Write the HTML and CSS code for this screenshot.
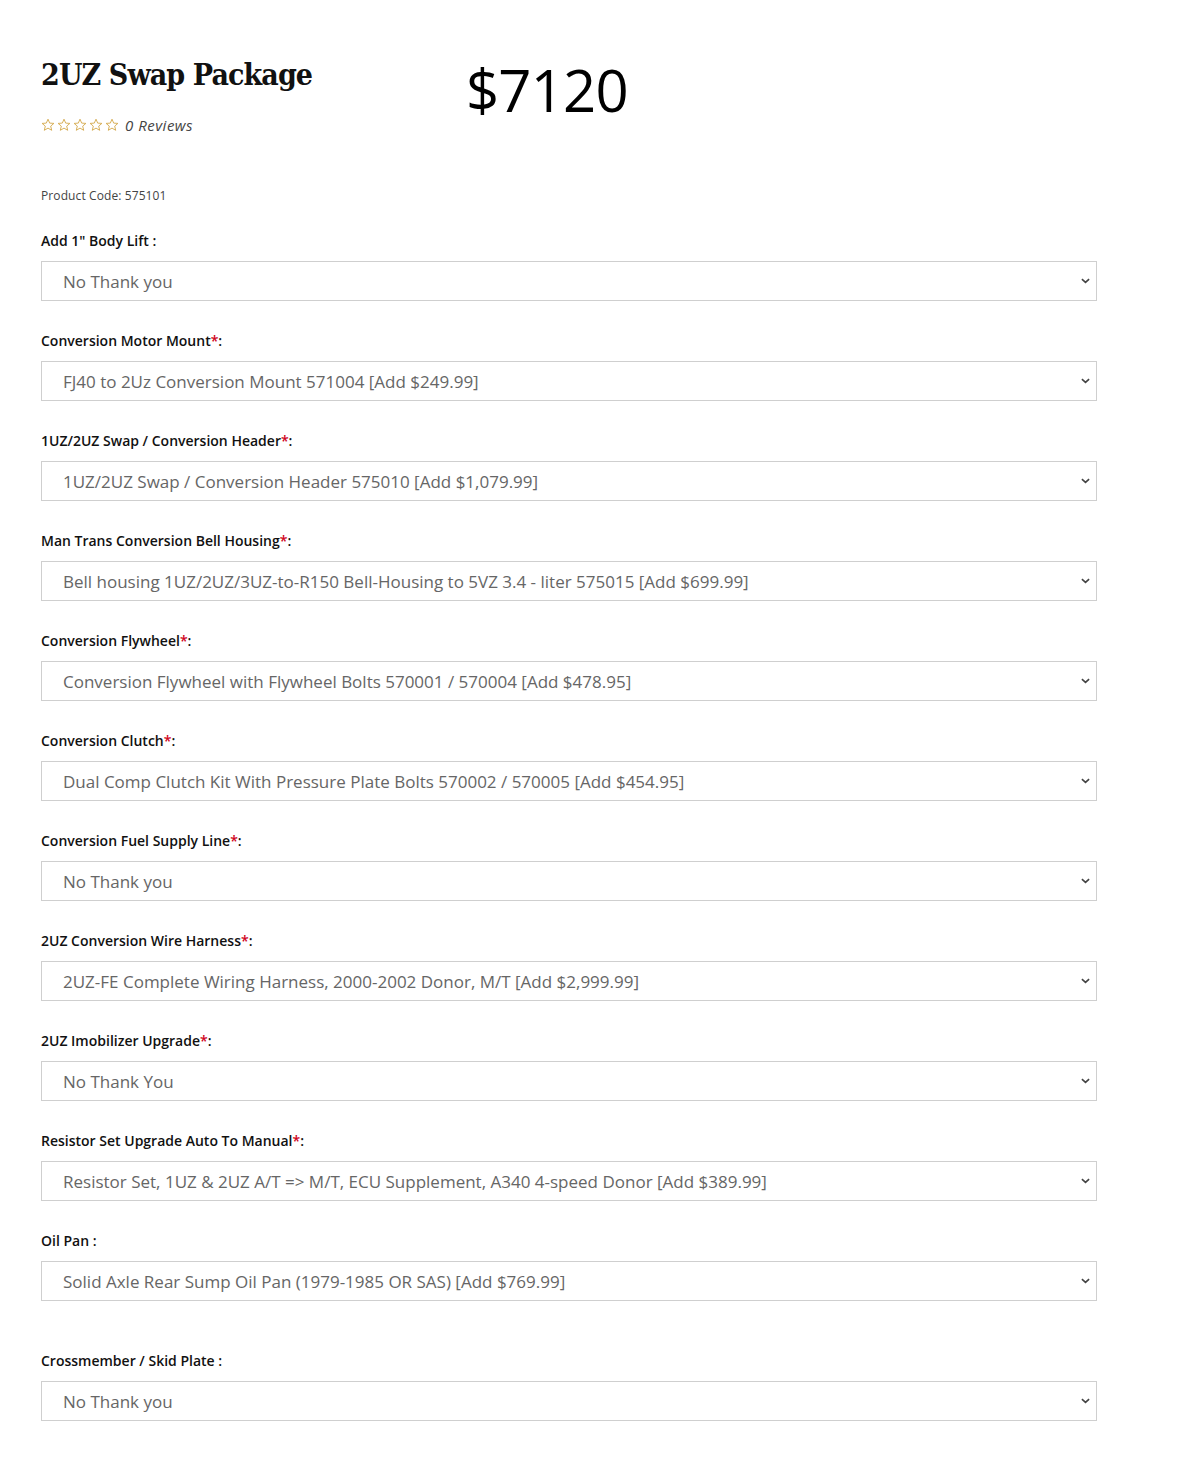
FILE: index.html
```html
<!DOCTYPE html>
<html>
<head>
<meta charset="utf-8">
<link rel="stylesheet" href="styles.css">
</head>
<body>
<div class="page">
  <div class="head">
    <div class="title-block">
      <h1 class="title">2UZ Swap Package</h1>
      <div class="rating">
        <span class="stars">
          <svg viewBox="0 0 14 14" class="star"><path d="M7 1.2 8.7 5.1 12.9 5.4 9.7 8.1 10.7 12.3 7 10.1 3.3 12.3 4.3 8.1 1.1 5.4 5.3 5.1Z"/></svg>
          <svg viewBox="0 0 14 14" class="star"><path d="M7 1.2 8.7 5.1 12.9 5.4 9.7 8.1 10.7 12.3 7 10.1 3.3 12.3 4.3 8.1 1.1 5.4 5.3 5.1Z"/></svg>
          <svg viewBox="0 0 14 14" class="star"><path d="M7 1.2 8.7 5.1 12.9 5.4 9.7 8.1 10.7 12.3 7 10.1 3.3 12.3 4.3 8.1 1.1 5.4 5.3 5.1Z"/></svg>
          <svg viewBox="0 0 14 14" class="star"><path d="M7 1.2 8.7 5.1 12.9 5.4 9.7 8.1 10.7 12.3 7 10.1 3.3 12.3 4.3 8.1 1.1 5.4 5.3 5.1Z"/></svg>
          <svg viewBox="0 0 14 14" class="star"><path d="M7 1.2 8.7 5.1 12.9 5.4 9.7 8.1 10.7 12.3 7 10.1 3.3 12.3 4.3 8.1 1.1 5.4 5.3 5.1Z"/></svg>
        </span>
        <span class="reviews">0 Reviews</span>
      </div>
    </div>
    <div class="price">$7120</div>
  </div>

  <div class="code">Product Code: 575101</div>

  <div class="fields">
  <div class="field">
    <label class="label">Add 1" Body Lift :</label>
    <div class="select-wrap"><select class="select"><option>No Thank you</option></select><svg class="chev" viewBox="0 0 10 6"><path d="M1 1 5 4.6 9 1"/></svg></div>
  </div>

  <div class="field">
    <label class="label">Conversion Motor Mount<span class="req">*</span>:</label>
    <div class="select-wrap"><select class="select"><option>FJ40 to 2Uz Conversion Mount 571004 [Add $249.99]</option></select><svg class="chev" viewBox="0 0 10 6"><path d="M1 1 5 4.6 9 1"/></svg></div>
  </div>

  <div class="field">
    <label class="label">1UZ/2UZ Swap / Conversion Header<span class="req">*</span>:</label>
    <div class="select-wrap"><select class="select"><option>1UZ/2UZ Swap / Conversion Header 575010 [Add $1,079.99]</option></select><svg class="chev" viewBox="0 0 10 6"><path d="M1 1 5 4.6 9 1"/></svg></div>
  </div>

  <div class="field">
    <label class="label">Man Trans Conversion Bell Housing<span class="req">*</span>:</label>
    <div class="select-wrap"><select class="select"><option>Bell housing 1UZ/2UZ/3UZ-to-R150 Bell-Housing to 5VZ 3.4 - liter 575015 [Add $699.99]</option></select><svg class="chev" viewBox="0 0 10 6"><path d="M1 1 5 4.6 9 1"/></svg></div>
  </div>

  <div class="field">
    <label class="label">Conversion Flywheel<span class="req">*</span>:</label>
    <div class="select-wrap"><select class="select"><option>Conversion Flywheel with Flywheel Bolts 570001 / 570004 [Add $478.95]</option></select><svg class="chev" viewBox="0 0 10 6"><path d="M1 1 5 4.6 9 1"/></svg></div>
  </div>

  <div class="field">
    <label class="label">Conversion Clutch<span class="req">*</span>:</label>
    <div class="select-wrap"><select class="select"><option>Dual Comp Clutch Kit With Pressure Plate Bolts 570002 / 570005 [Add $454.95]</option></select><svg class="chev" viewBox="0 0 10 6"><path d="M1 1 5 4.6 9 1"/></svg></div>
  </div>

  <div class="field">
    <label class="label">Conversion Fuel Supply Line<span class="req">*</span>:</label>
    <div class="select-wrap"><select class="select"><option>No Thank you</option></select><svg class="chev" viewBox="0 0 10 6"><path d="M1 1 5 4.6 9 1"/></svg></div>
  </div>

  <div class="field">
    <label class="label">2UZ Conversion Wire Harness<span class="req">*</span>:</label>
    <div class="select-wrap"><select class="select"><option>2UZ-FE Complete Wiring Harness, 2000-2002 Donor, M/T [Add $2,999.99]</option></select><svg class="chev" viewBox="0 0 10 6"><path d="M1 1 5 4.6 9 1"/></svg></div>
  </div>

  <div class="field">
    <label class="label">2UZ Imobilizer Upgrade<span class="req">*</span>:</label>
    <div class="select-wrap"><select class="select"><option>No Thank You</option></select><svg class="chev" viewBox="0 0 10 6"><path d="M1 1 5 4.6 9 1"/></svg></div>
  </div>

  <div class="field">
    <label class="label">Resistor Set Upgrade Auto To Manual<span class="req">*</span>:</label>
    <div class="select-wrap"><select class="select"><option>Resistor Set, 1UZ &amp; 2UZ A/T =&gt; M/T, ECU Supplement, A340 4-speed Donor [Add $389.99]</option></select><svg class="chev" viewBox="0 0 10 6"><path d="M1 1 5 4.6 9 1"/></svg></div>
  </div>

  <div class="field">
    <label class="label">Oil Pan :</label>
    <div class="select-wrap"><select class="select"><option>Solid Axle Rear Sump Oil Pan (1979-1985 OR SAS) [Add $769.99]</option></select><svg class="chev" viewBox="0 0 10 6"><path d="M1 1 5 4.6 9 1"/></svg></div>
  </div>

  <div class="field field-gap">
    <label class="label">Crossmember / Skid Plate :</label>
    <div class="select-wrap"><select class="select"><option>No Thank you</option></select><svg class="chev" viewBox="0 0 10 6"><path d="M1 1 5 4.6 9 1"/></svg></div>
  </div>
  </div>
</div>
</body>
</html>
```

FILE: styles.css
```css
html, body {
  margin: 0;
  padding: 0;
  background: #fff;
}

.page {
  width: 1056px;
  padding: 52px 0 40px 41px;
  font-family: "Open Sans", "DejaVu Sans", sans-serif;
  color: #111;
}

.head {
  display: flex;
  align-items: flex-start;
}

.title-block {
  width: 425px;
}

.title {
  margin: 0;
  font-family: "DejaVu Serif Condensed", "DejaVu Serif", serif;
  font-stretch: condensed;
  font-weight: bold;
  font-size: 30px;
  line-height: 46px;
  letter-spacing: -0.9px;
  color: #111;
}

.rating {
  display: flex;
  align-items: center;
  margin-top: 19px;
  height: 16px;
}

.stars {
  display: flex;
  gap: 2px;
}

.star {
  width: 14px;
  height: 14px;
  fill: none;
  stroke: #d4a84a;
  stroke-width: 0.9;
  stroke-linejoin: round;
}

.reviews {
  margin-left: 6px;
  font-style: italic;
  font-size: 15px;
  letter-spacing: 0.5px;
  color: #444;
}

.price {
  font-family: "Open Sans", "Liberation Sans", sans-serif;
  font-size: 58px;
  line-height: 80px;
  margin-top: -2px;
  letter-spacing: -0.8px;
  color: #000;
}

.code {
  margin-top: 55px;
  font-size: 12px;
  letter-spacing: 0.1px;
  line-height: 16px;
  color: #444;
}

.fields {
  display: flex;
  flex-direction: column;
  gap: 30px;
  margin-top: 27px;
}

.field-gap {
  margin-top: 20px;
}

.label {
  display: block;
  font-size: 14px;
  font-weight: 600;
  line-height: 20px;
  color: #111;
  margin-bottom: 10px;
}

.req {
  color: #d0021b;
}

.select-wrap {
  position: relative;
  width: 1056px;
}

.select {
  -webkit-appearance: none;
  appearance: none;
  display: block;
  width: 100%;
  height: 40px;
  box-sizing: border-box;
  border: 1px solid #cfcfcf;
  border-radius: 0;
  background: #fff;
  padding: 0 40px 0 21px;
  font-family: "Open Sans", "DejaVu Sans", sans-serif;
  font-size: 17px;
  color: #666;
  outline: none;
}

.chev {
  position: absolute;
  right: 7px;
  top: 17px;
  width: 9px;
  height: 6px;
  fill: none;
  stroke: #444;
  stroke-width: 1.8;
  pointer-events: none;
}
```
